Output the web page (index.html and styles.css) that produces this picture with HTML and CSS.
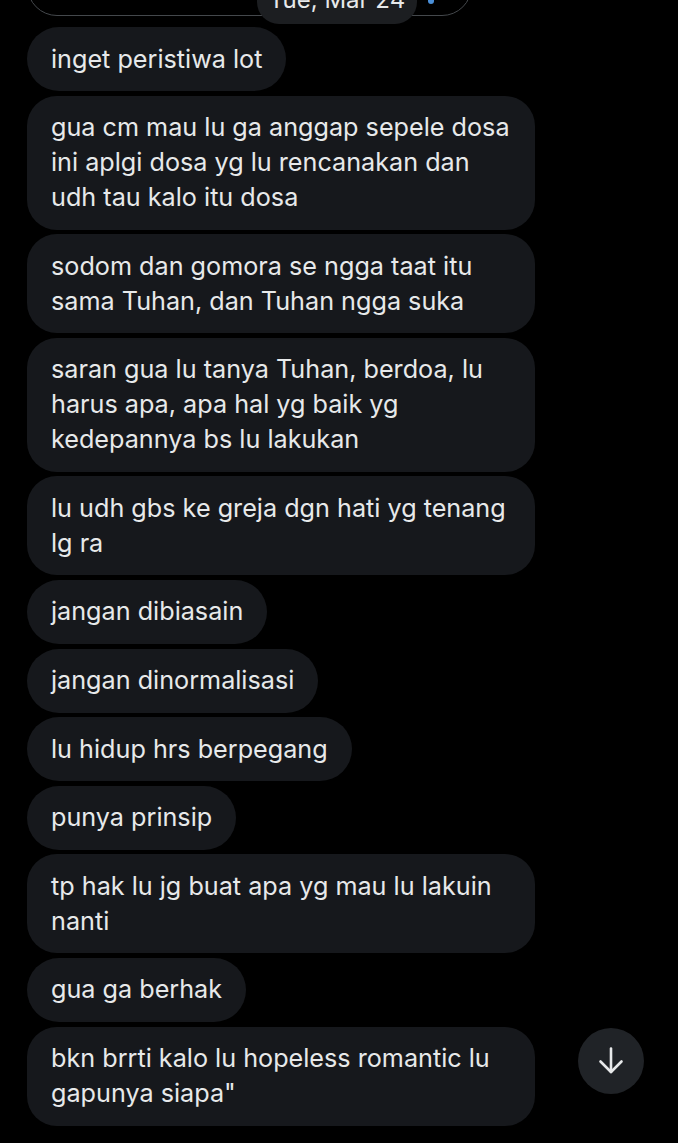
FILE: index.html
```html
<!DOCTYPE html>
<html lang="id">
<head>
<meta charset="utf-8">
<title>Chat</title>
<link rel="stylesheet" href="styles.css">
</head>
<body>
<div class="screen">
  <div class="top">
    <div class="search-pill"><span class="pill-text">p&nbsp;&nbsp;g</span></div>
    <div class="date-chip">Tue, Mar 24</div>
    <span class="blue-mark"></span>
  </div>
  <div class="chat">
    <div class="bubble">inget peristiwa lot</div>
    <div class="bubble wide">gua cm mau lu ga anggap sepele dosa<br>ini aplgi dosa yg lu rencanakan dan<br>udh tau kalo itu dosa</div>
    <div class="bubble wide">sodom dan gomora se ngga taat itu<br>sama Tuhan, dan Tuhan ngga suka</div>
    <div class="bubble wide">saran gua lu tanya Tuhan, berdoa, lu<br>harus apa, apa hal yg baik yg<br>kedepannya bs lu lakukan</div>
    <div class="bubble wide">lu udh gbs ke greja dgn hati yg tenang<br>lg ra</div>
    <div class="bubble">jangan dibiasain</div>
    <div class="bubble">jangan dinormalisasi</div>
    <div class="bubble">lu hidup hrs berpegang</div>
    <div class="bubble">punya prinsip</div>
    <div class="bubble wide">tp hak lu jg buat apa yg mau lu lakuin<br>nanti</div>
    <div class="bubble">gua ga berhak</div>
    <div class="bubble wide">bkn brrti kalo lu hopeless romantic lu<br>gapunya siapa"</div>
  </div>
  <button class="scroll-down" aria-label="Scroll to bottom">
    <svg width="32" height="32" viewBox="0 0 32 32" fill="none" stroke="#e7e9ea" stroke-width="2.6" stroke-linecap="round" stroke-linejoin="round">
      <path d="M16 3.5 V27"/>
      <path d="M5.5 16.5 L16 27 L26.5 16.5"/>
    </svg>
  </button>
</div>
</body>
</html>
```

FILE: styles.css
```css
html, body {
  margin: 0;
  padding: 0;
  background: #000;
}

.screen {
  position: relative;
  width: 678px;
  height: 1143px;
  overflow: hidden;
  font-family: Inter, "Open Sans", sans-serif;
  color: #e7e9ea;
}

.top {
  position: relative;
  display: flow-root;
  height: 27px;
  padding-left: 27px;
}

.search-pill {
  width: 445px;
  height: 60px;
  margin-top: -44px;
  box-sizing: border-box;
  border: 1.5px solid #44484c;
  border-radius: 30px;
  padding-left: 14px;
  font-size: 25px;
  line-height: 56px;
  color: #c9cccf;
  overflow: hidden;
}

.pill-text {
  display: inline-block;
  transform: translateY(-12px);
  word-spacing: 14px;
}

.date-chip {
  position: absolute;
  left: 257px;
  top: -24px;
  width: 160px;
  height: 48px;
  box-sizing: border-box;
  border-radius: 22px;
  background: #1c1e21;
  font-size: 24px;
  line-height: 48px;
  text-align: center;
  color: #e7e9ea;
}

.blue-mark {
  position: absolute;
  left: 428px;
  top: -4px;
  width: 6px;
  height: 8px;
  border-radius: 3px;
  background: #4a8fd8;
}

.chat {
  display: flex;
  flex-direction: column;
  align-items: flex-start;
  gap: 4.6px;
  padding-left: 27px;
}

.bubble {
  box-sizing: border-box;
  background: #16181c;
  border-radius: 32px;
  padding: 14.5px 24px;
  font-size: 25.2px;
  line-height: 35px;
  white-space: nowrap;
}

.bubble.wide {
  width: 508px;
  border-radius: 30px;
}

.scroll-down {
  position: absolute;
  left: 578px;
  top: 1028px;
  width: 66px;
  height: 66px;
  padding: 0;
  border: none;
  border-radius: 50%;
  background: #202327;
  display: flex;
  align-items: center;
  justify-content: center;
}
```
